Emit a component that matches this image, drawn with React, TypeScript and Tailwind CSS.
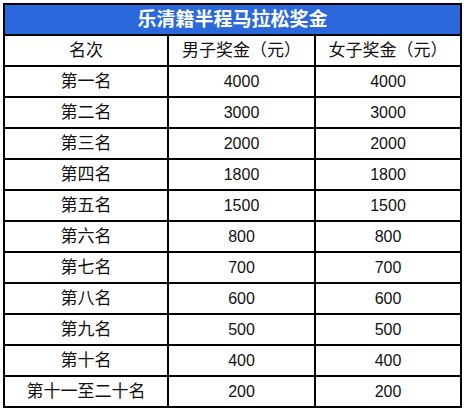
import React from 'react';

const rows: [string, string, string][] = [
  ['第一名', '4000', '4000'],
  ['第二名', '3000', '3000'],
  ['第三名', '2000', '2000'],
  ['第四名', '1800', '1800'],
  ['第五名', '1500', '1500'],
  ['第六名', '800', '800'],
  ['第七名', '700', '700'],
  ['第八名', '600', '600'],
  ['第九名', '500', '500'],
  ['第十名', '400', '400'],
  ['第十一至二十名', '200', '200'],
];

const cjk = "font-['Liberation_Sans','Noto_Sans_CJK_SC',sans-serif]";

export default function App() {
  return (
    <div className="bg-white w-[464px] h-[411px] pt-[3px] pl-[3px]">
      <table className={`${cjk} border-collapse border-2 border-black w-[457px] table-fixed text-[#111]`}>
        <colgroup>
          <col className="w-[164px]" />
          <col className="w-[147px]" />
          <col className="w-[146px]" />
        </colgroup>
        <thead>
          <tr className="h-[31px]">
            <th colSpan={3} className="border-2 border-black bg-[#2a68dc] text-white text-[19px] font-bold leading-none p-0">
              乐清籍半程马拉松奖金
            </th>
          </tr>
          <tr className="h-[31px]">
            <th className="border-2 border-black font-normal text-[17px] leading-none p-0">名次</th>
            <th className="border-2 border-black font-normal text-[17px] leading-none p-0">男子奖金（元）</th>
            <th className="border-2 border-black font-normal text-[17px] leading-none p-0">女子奖金（元）</th>
          </tr>
        </thead>
        <tbody>
          {rows.map(([rank, men, women]) => (
            <tr key={rank} className="h-[31px]">
              <td className="border-2 border-black text-center text-[17px] leading-none p-0">{rank}</td>
              <td className="border-2 border-black text-center text-[16px] leading-none p-0">{men}</td>
              <td className="border-2 border-black text-center text-[16px] leading-none p-0">{women}</td>
            </tr>
          ))}
        </tbody>
      </table>
    </div>
  );
}
